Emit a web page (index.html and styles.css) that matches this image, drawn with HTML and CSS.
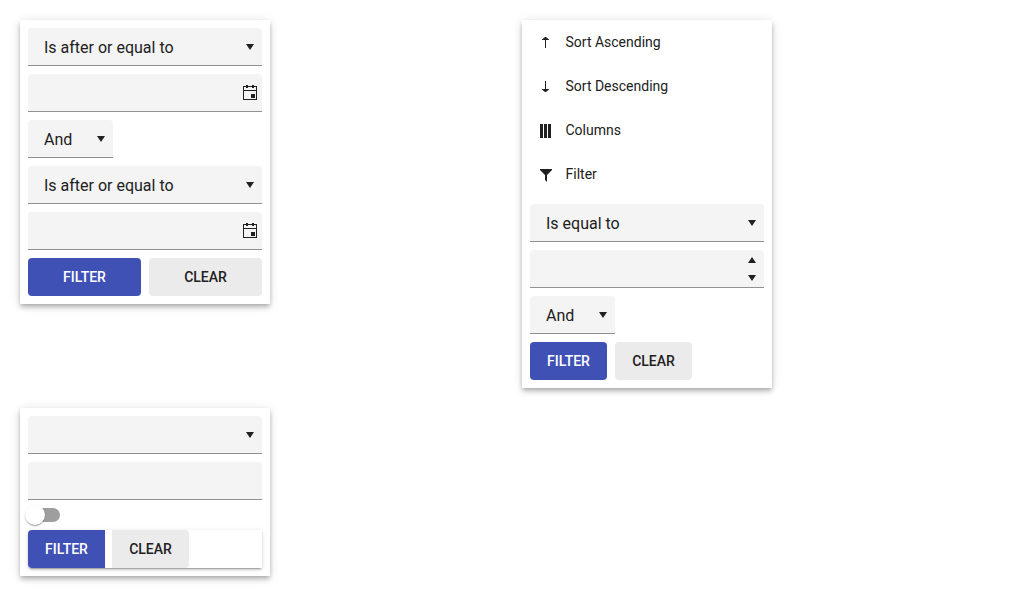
FILE: index.html
```html
<!DOCTYPE html>
<html lang="en">
<head>
<meta charset="utf-8">
<title>Filter menus</title>
<link rel="stylesheet" href="styles.css">
</head>
<body>
<main class="page">
  <div class="column">
    <form class="panel">
      <div class="field"><span class="value">Is after or equal to</span><svg class="icon" viewBox="0 0 16 16"><path d="M4 5h8l-4 6z"/></svg></div>
      <div class="field"><span class="value"></span><svg class="icon" viewBox="0 0 16 16"><path fill-rule="evenodd" d="M1 1h3V0h2v1h4V0h2v1h3v14H1zM2 2v3h12V2h-2v1h-2V2H6v1H4V2zM2 6v8h12V6zM9 9h4v4H9z"/></svg></div>
      <div class="field field-short"><span class="value">And</span><svg class="icon" viewBox="0 0 16 16"><path d="M4 5h8l-4 6z"/></svg></div>
      <div class="field"><span class="value">Is after or equal to</span><svg class="icon" viewBox="0 0 16 16"><path d="M4 5h8l-4 6z"/></svg></div>
      <div class="field"><span class="value"></span><svg class="icon" viewBox="0 0 16 16"><path fill-rule="evenodd" d="M1 1h3V0h2v1h4V0h2v1h3v14H1zM2 2v3h12V2h-2v1h-2V2H6v1H4V2zM2 6v8h12V6zM9 9h4v4H9z"/></svg></div>
      <div class="actions actions-stretch">
        <button type="button" class="button primary">FILTER</button>
        <button type="button" class="button">CLEAR</button>
      </div>
    </form>
    <form class="panel">
      <div class="field"><span class="value"></span><svg class="icon" viewBox="0 0 16 16"><path d="M4 5h8l-4 6z"/></svg></div>
      <div class="field"></div>
      <div class="switch"><span class="track"></span><span class="thumb"></span></div>
      <div class="actions group">
        <button type="button" class="button primary">FILTER</button>
        <button type="button" class="button">CLEAR</button>
      </div>
    </form>
  </div>
  <div class="column">
    <form class="panel panel-menu">
      <ul class="menu">
        <li><svg class="icon" viewBox="0 0 16 16"><path d="M7 14V6H4v-.5L7 3h1l3 2.500V6H8v8z"/></svg>Sort Ascending</li>
        <li><svg class="icon" viewBox="0 0 16 16"><path d="M7 3v8H4v.5L7 14h1l3-2.500V11H8V3z"/></svg>Sort Descending</li>
        <li><svg class="icon" viewBox="0 0 16 16"><path d="M2 2h3v14H2zM6 2h3v14H6zM10 2h3v14h-3z"/></svg>Columns</li>
        <li><svg class="icon" viewBox="0 0 16 16"><path d="M2 3h12v1L9 9v7l-2-2V9L2 4z"/></svg>Filter</li>
      </ul>
      <div class="field"><span class="value">Is equal to</span><svg class="icon" viewBox="0 0 16 16"><path d="M4 5h8l-4 6z"/></svg></div>
      <div class="field"><span class="value"></span><svg class="icon spinner" viewBox="0 0 16 32"><path d="M4 10h8L8 4zM4 22h8l-4 6z"/></svg></div>
      <div class="field field-short"><span class="value">And</span><svg class="icon" viewBox="0 0 16 16"><path d="M4 5h8l-4 6z"/></svg></div>
      <div class="actions">
        <button type="button" class="button primary">FILTER</button>
        <button type="button" class="button">CLEAR</button>
      </div>
    </form>
  </div>
</main>
</body>
</html>
```
FILE: styles.css
```css
* { box-sizing: border-box; }

body {
  margin: 0;
  background: #fff;
  color: #212121;
  font-family: Roboto, sans-serif;
  font-size: 16px;
}

.page {
  display: grid;
  grid-template-columns: 250px 250px;
  column-gap: 252px;
  align-items: start;
  padding: 20px;
}

.column {
  display: flex;
  flex-direction: column;
  gap: 104px;
}

.panel {
  display: flex;
  flex-direction: column;
  gap: 8px;
  padding: 8px;
  background: #fff;
  box-shadow: 0 2px 4px -1px rgba(0, 0, 0, .2), 0 4px 5px rgba(0, 0, 0, .14), 0 1px 10px rgba(0, 0, 0, .12);
}

.panel-menu { padding-top: 0; }

.field {
  display: flex;
  align-items: center;
  justify-content: space-between;
  height: 38px;
  padding: 1px 4px 0 16px;
  border-bottom: 1px solid #919191;
  border-radius: 4px 4px 0 0;
  background: #f4f4f4;
  line-height: 20px;
}

.value { padding-top: 2px; }

.field-short { width: 85px; }

.icon {
  display: block;
  flex: none;
  width: 16px;
  height: 16px;
  fill: #212121;
}

.spinner { height: 32px; }

.actions { display: flex; gap: 8px; }

.actions-stretch .button { flex: 1; }

.button {
  width: 77px;
  height: 38px;
  padding: 0;
  border: 0;
  border-radius: 4px;
  background: #ebebeb;
  color: #212121;
  font: 500 14px Roboto, sans-serif;
}

.primary {
  background: #3f51b5;
  color: #fff;
}

.group {
  gap: 7px;
  border-radius: 4px 0 0 4px;
  box-shadow: 0 3px 1px -2px rgba(0, 0, 0, .2), 0 2px 2px rgba(0, 0, 0, .14), 0 1px 5px rgba(0, 0, 0, .12);
}

.group .button { border-radius: 0 4px 4px 0; }
.group .primary { border-radius: 4px 0 0 4px; }

.switch {
  position: relative;
  width: 34px;
  height: 14px;
}

.track {
  display: block;
  width: 32px;
  height: 14px;
  border-radius: 7px;
  background: #9e9e9e;
}

.thumb {
  position: absolute;
  top: -3px;
  left: -3px;
  width: 20px;
  height: 20px;
  border-radius: 50%;
  background: #fff;
  box-shadow: 0 2px 1px -1px rgba(0, 0, 0, .2), 0 1px 1px rgba(0, 0, 0, .14), 0 1px 3px rgba(0, 0, 0, .12);
}

.menu {
  margin: 0 -8px;
  padding: 0;
  list-style: none;
  font-size: 14px;
}

.menu li {
  display: flex;
  align-items: center;
  gap: 11.500px;
  height: 44px;
  padding: 0 16px;
}
```
